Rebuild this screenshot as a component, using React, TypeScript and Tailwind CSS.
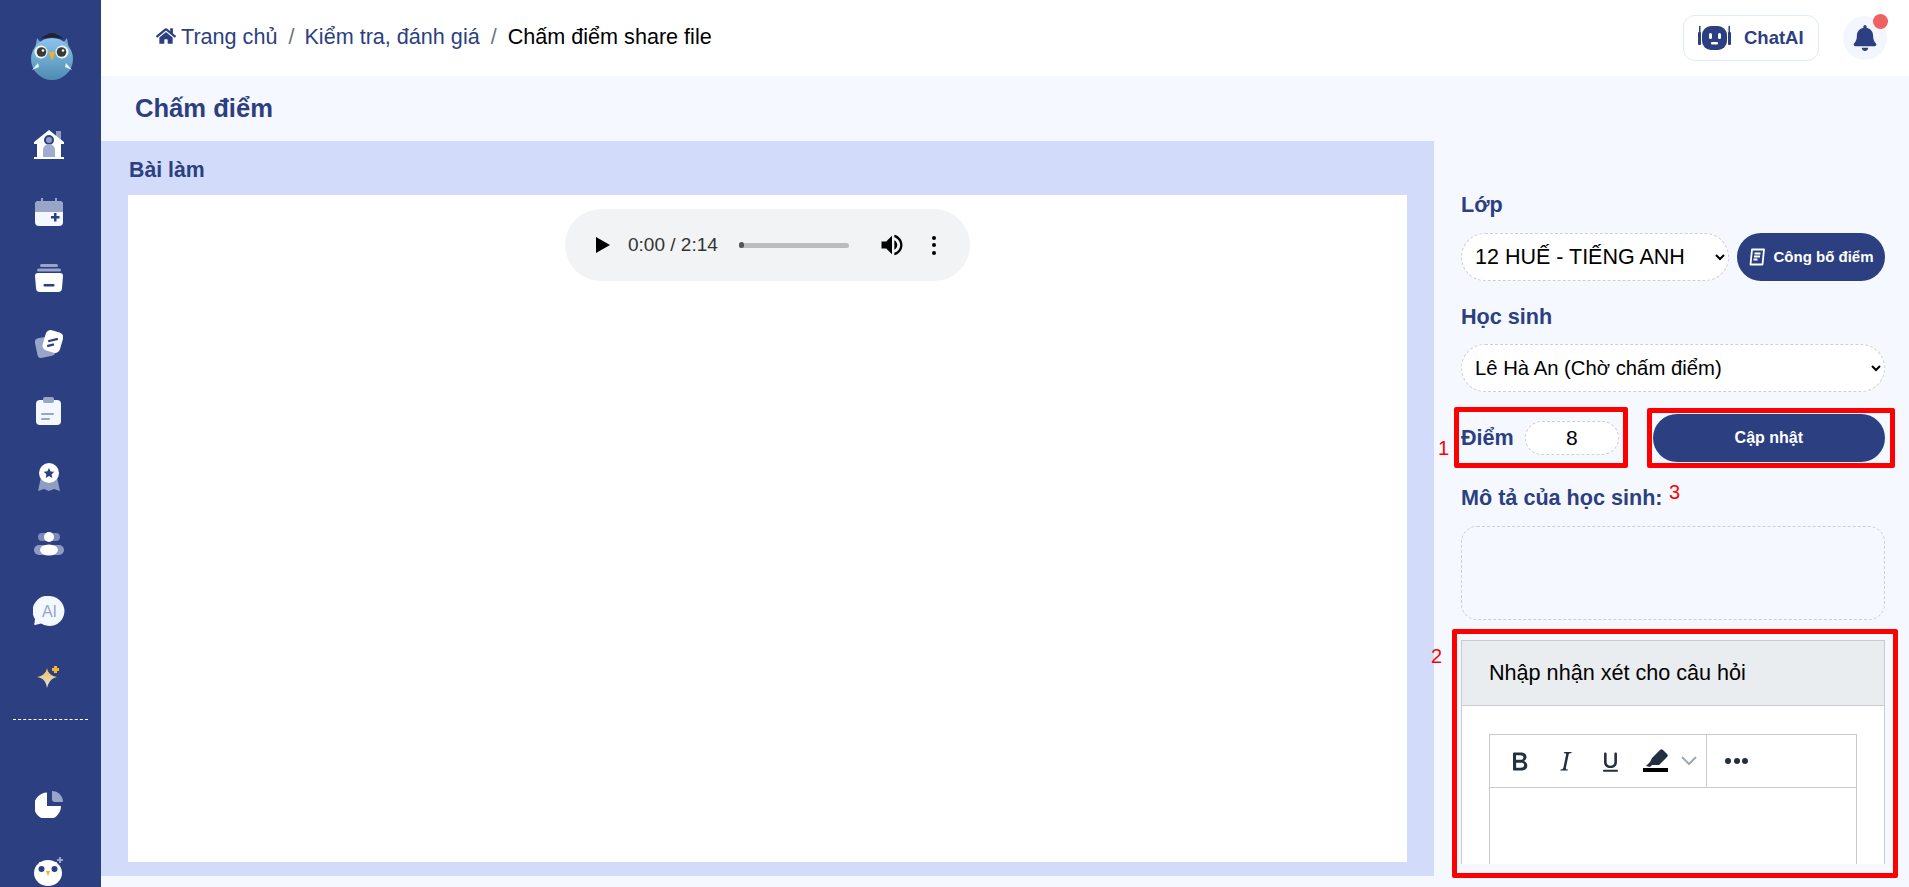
import { FaHome, FaBell } from "react-icons/fa";
import { ReactNode } from "react";

const Logo = () => (
  <svg width="44" height="48" viewBox="0 0 44 48">
    <defs>
      <linearGradient id="owl" x1="0" y1="0" x2="0" y2="1">
        <stop offset="0" stopColor="#8cc4ea" />
        <stop offset="1" stopColor="#4f8cb2" />
      </linearGradient>
    </defs>
    <path d="M7 6l4 5h22l4-5 2 12H5z" fill="#6fa8d2" />
    <circle cx="22" cy="27" r="21" fill="url(#owl)" />
    <path d="M10 7c4-3 8-6 12-6s8 3 12 6c-7-2-17-2-24 0z" fill="#1f2230" />
    <circle cx="11" cy="20" r="6.500" fill="#f3f7fa" />
    <circle cx="32" cy="20" r="6.500" fill="#f3f7fa" />
    <circle cx="11.500" cy="20" r="4.800" fill="#3a3a3a" />
    <circle cx="31.500" cy="20" r="4.800" fill="#3a3a3a" />
    <circle cx="13" cy="18.500" r="1.300" fill="#fff" />
    <circle cx="33" cy="18.500" r="1.300" fill="#fff" />
    <path d="M19 20h6l-3 9z" fill="#f5b21c" />
    <path d="M2 38l6-7 1 4z M42 38l-6-7-1 4z" fill="#eef3f7" />
  </svg>
);

const HomeIcon = () => (
  <svg width="32" height="30" viewBox="0 0 32 30">
    <path d="M23 1h5v9l-5-4z" fill="#8f9cc4" />
    <path d="M16 0L31 12v2h-3v13H4V14H1v-2z" fill="#fff" />
    <rect x="1" y="27" width="30" height="2" fill="#fff" />
    <circle cx="16" cy="10" r="4" fill="#8f9cc4" stroke="#2c3f80" strokeWidth="2" />
    <path d="M10 27V20a6 6 0 0112 0v7z" fill="#a0acd0" />
  </svg>
);

const CalendarIcon = () => (
  <svg width="28" height="28" viewBox="0 0 28 28">
    <rect x="0" y="3" width="28" height="25" rx="4" fill="#f3f8ff" />
    <path d="M0 14V7a4 4 0 014-4h20a4 4 0 014 4v7z" fill="#98a4c8" />
    <rect x="6" y="0" width="2" height="5" fill="#98a4c8" />
    <rect x="20" y="0" width="2" height="5" fill="#98a4c8" />
    <path d="M19 15h2.500v3h3v2.500h-3v3H19v-3h-3V18h3z" fill="#2c3f80" />
  </svg>
);

const ArchiveIcon = () => (
  <svg width="28" height="28" viewBox="0 0 28 28">
    <rect x="5" y="0" width="18" height="3" rx="1.500" fill="#98a4c8" />
    <rect x="2" y="4.500" width="24" height="3" rx="1.500" fill="#98a4c8" />
    <path d="M3 9h22a3 3 0 013 3l-1 12a4 4 0 01-4 4H5a4 4 0 01-4-4L0 12a3 3 0 013-3z" fill="#fff" />
    <rect x="8.500" y="20" width="11" height="2.500" rx="1" fill="#2c3f80" />
  </svg>
);

const NotesIcon = () => (
  <svg width="28" height="29" viewBox="0 0 28 29">
    <rect x="1" y="7" width="18" height="20" rx="4" fill="#98a4c8" transform="rotate(-12 10 17)" />
    <rect x="9" y="1" width="18" height="21" rx="5" fill="#fff" transform="rotate(16 18 11)" />
    <rect x="13" y="9" width="10" height="2.200" fill="#2c3f80" transform="rotate(-14 18 10)" />
    <rect x="12" y="14" width="7" height="2.200" fill="#2c3f80" transform="rotate(-14 16 15)" />
  </svg>
);

const ClipboardIcon = () => (
  <svg width="26" height="28" viewBox="0 0 26 28">
    <rect x="0" y="3" width="25" height="25" rx="4" fill="#f3f8ff" />
    <rect x="7" y="0" width="11" height="6" rx="2" fill="#98a4c8" />
    <rect x="5" y="16" width="13" height="2" rx="1" fill="#98a4c8" />
    <rect x="5" y="21" width="9" height="2" rx="1" fill="#98a4c8" />
  </svg>
);

const MedalIcon = () => (
  <svg width="22" height="29" viewBox="0 0 22 29">
    <path d="M3 14h16l3 14-6-2-5 2-5-2-6 2z" fill="#8f9cc4" />
    <circle cx="11" cy="10" r="10" fill="#fff" />
    <path d="M11 5l1.600 3.400 3.700.4-2.700 2.500.7 3.700L11 13l-3.300 1.900.7-3.700-2.700-2.500 3.700-.4z" fill="#2c3f80" />
  </svg>
);

const UsersIcon = () => (
  <svg width="30" height="24" viewBox="0 0 30 24">
    <rect x="4" y="1" width="22" height="8" rx="4" fill="#7c8ab6" />
    <rect x="0" y="13" width="30" height="10" rx="5" fill="#8f9cc4" />
    <circle cx="15" cy="5" r="5" fill="#fff" />
    <ellipse cx="15" cy="18" rx="9" ry="5.500" fill="#fff" />
  </svg>
);

const AiIcon = () => (
  <svg width="32" height="30" viewBox="0 0 32 30">
    <path d="M16.500 0a15 15 0 11-8.500 27.400L2 29c-1 0-1-1-.5-2l.5-4A15 15 0 0116.500 0z" fill="#f3f8ff" />
    <text x="16.500" y="21" textAnchor="middle" fontFamily="Liberation Sans, sans-serif" fontSize="16" fill="#98a4c8">AI</text>
  </svg>
);

const SparkleIcon = () => (
  <svg width="24" height="24" viewBox="0 0 24 24">
    <defs>
      <linearGradient id="sparkle" x1="0" y1="0" x2="0" y2="1">
        <stop offset="0" stopColor="#f6c04d" />
        <stop offset="1" stopColor="#dfe1e8" />
      </linearGradient>
    </defs>
    <path d="M10 3c1 5 4 8 10 9-5 1-8 4-10 11-1-7-4-10-10-11 6-1 9-4 10-9z" fill="url(#sparkle)" />
    <path d="M17 1h3v2h2v3h-2v2h-3V6h-2V3h2z" fill="#f6b530" />
  </svg>
);

const PieIcon = () => (
  <svg width="28" height="27" viewBox="0 0 28 27">
    <path d="M12 1.500V15h14a13.500 13.500 0 11-14-13.500z" fill="#fff" />
    <path d="M17 0a11 11 0 0111 11h-8a3 3 0 01-3-3z" fill="#98a4c8" />
  </svg>
);

const OwlMono = () => (
  <svg width="30" height="30" viewBox="0 0 30 30">
    <ellipse cx="14" cy="17" rx="14" ry="13" fill="#fff" />
    <path d="M5 6h18l-1 2H6z" fill="#fff" />
    <path d="M25 1h2v2h2v2h-2v2h-2V5h-2V3h2z" fill="#98a4c8" />
    <circle cx="7.500" cy="13" r="3" fill="#2c3f80" />
    <circle cx="20.500" cy="13" r="3" fill="#2c3f80" />
    <path d="M12 15h4l-2 5z" fill="#f5b21c" />
  </svg>
);

const NavItem = ({ children }: { children: ReactNode }) => (
  <div className="flex h-[66.5px] shrink-0 items-center justify-center">{children}</div>
);

const Sidebar = () => (
  <aside className="flex w-[101px] shrink-0 flex-col overflow-hidden bg-[#2c3f80] pr-[3px]">
    <div className="flex h-[112px] shrink-0 items-center justify-center pl-[6px]">
      <Logo />
    </div>
    <NavItem><HomeIcon /></NavItem>
    <NavItem><CalendarIcon /></NavItem>
    <NavItem><ArchiveIcon /></NavItem>
    <NavItem><NotesIcon /></NavItem>
    <NavItem><ClipboardIcon /></NavItem>
    <NavItem><MedalIcon /></NavItem>
    <NavItem><UsersIcon /></NavItem>
    <NavItem><AiIcon /></NavItem>
    <NavItem><SparkleIcon /></NavItem>
    <div className="mx-[13px] mt-[8px] mb-[52px] w-[75px] shrink-0 border-t border-dashed border-white" />
    <NavItem><PieIcon /></NavItem>
    <NavItem><OwlMono /></NavItem>
  </aside>
);

const RobotIcon = () => (
  <svg width="33" height="26" viewBox="0 0 33 26">
    <rect x="0" y="7" width="3" height="13" rx="1" fill="#2c3f80" />
    <rect x="30" y="7" width="3" height="13" rx="1" fill="#2c3f80" />
    <rect x="1" y="1" width="1.500" height="7" fill="#2c3f80" />
    <rect x="30.500" y="1" width="1.500" height="7" fill="#2c3f80" />
    <rect x="4" y="1" width="25" height="24" rx="9" fill="#2c3f80" />
    <rect x="11" y="8" width="3" height="6" rx="1.500" fill="#fff" />
    <rect x="20" y="8" width="3" height="6" rx="1.500" fill="#fff" />
    <rect x="13" y="17" width="7" height="2.500" rx="1" fill="#fff" />
  </svg>
);

const Header = () => (
  <header className="flex h-[76px] shrink-0 items-center justify-between bg-white pr-[22px] pl-[55px]">
    <nav className="flex items-center pb-[1px] text-[21.600px] text-[#2c3f80]">
      <FaHome className="mr-[5px] h-[20px] w-[20px] -translate-y-px" />
      <span>Trang chủ</span>
      <span className="ml-[11px] mr-[10px] text-[#6c757d]">/</span>
      <span>Kiểm tra, đánh giá</span>
      <span className="ml-[11px] mr-[11px] text-[#6c757d]">/</span>
      <span className="text-black">Chấm điểm share file</span>
    </nav>
    <div className="flex items-center">
      <button className="flex h-[46px] w-[136px] items-center gap-[13px] rounded-[12px] border border-[#e0e8fd] bg-white pl-[14px] text-[18.500px] font-bold text-[#2c3f80]">
        <RobotIcon />
        ChatAI
      </button>
      <div className="relative ml-[24px] flex h-[44px] w-[44px] items-center justify-center rounded-full bg-[#f3f6fe]">
        <FaBell className="h-[26px] w-[26px] text-[#2c3f80]" />
        <span className="absolute -top-[2px] right-[-0.500px] h-[15px] w-[15px] rounded-full bg-[#f06161]" />
      </div>
    </div>
  </header>
);

const AudioBar = () => (
  <div className="ml-[437px] mt-[14px] flex h-[72px] w-[405px] items-center rounded-full bg-[#f1f3f4] pl-[31px] text-[19px] text-[#333]">
    <svg width="14" height="16" viewBox="0 0 14 16"><path d="M0 0l14 8-14 8z" fill="#000" /></svg>
    <span className="ml-[18px] w-[90px] whitespace-nowrap">0:00 / 2:14</span>
    <div className="relative ml-[21px] h-[5px] w-[110px] rounded-full bg-[#bcbcbc]">
      <span className="absolute top-[-0.500px] left-0 h-[6px] w-[5px] rounded-full bg-[#555]" />
    </div>
    <svg className="ml-[29px]" width="28" height="28" viewBox="0 0 24 24" fill="#000">
      <path d="M3 9v6h4l5 5V4L7 9H3zm13.500 3c0-1.770-1.020-3.290-2.500-4.030v8.050c1.480-.73 2.500-2.250 2.500-4.020zM14 3.230v2.060c2.890.86 5 3.540 5 6.710s-2.110 5.850-5 6.710v2.060c4.010-.91 7-4.490 7-8.770s-2.990-7.860-7-8.770z" />
    </svg>
    <div className="ml-[26px] flex flex-col gap-[3.500px]">
      <span className="h-[4px] w-[4px] rounded-full bg-black" />
      <span className="h-[4px] w-[4px] rounded-full bg-black" />
      <span className="h-[4px] w-[4px] rounded-full bg-black" />
    </div>
  </div>
);

const FieldSelect = ({ value, className }: { value: string; className: string }) => (
  <select
    defaultValue={value}
    className={`h-[48px] rounded-[24px] border border-dashed border-[#cfcfcf] bg-white pl-[9px] pr-[6px] text-black ${className}`}
  >
    <option>{value}</option>
  </select>
);

const Label = ({ children, className }: { children: ReactNode; className?: string }) => (
  <div className={`text-[21.600px] leading-[24px] font-bold text-[#2c3f80] ${className ?? ""}`}>{children}</div>
);

const Editor = () => (
  <div className="mt-[20px] h-[224px] shrink-0 overflow-hidden">
    <div className="h-[300px] border border-[#c8ccd0] bg-white">
      <div className="flex h-[65px] items-center border-b border-[#c8ccd0] bg-[#eaedf0] pl-[27px] text-[21.600px] text-black">
        Nhập nhận xét cho câu hỏi
      </div>
      <div className="mx-[27px] mt-[28px] h-[200px] border border-[#c8ccd0]">
        <div className="flex h-[53px] items-center border-b border-[#c8ccd0] text-[#222f3e]">
          <div className="flex h-full w-[217px] items-center border-r border-[#c8ccd0] pl-[7px]">
            <span className="flex w-[45.500px] justify-center">
              <svg width="31" height="31" viewBox="0 0 24 24" fill="currentColor"><path d="M7.800 19c-.3 0-.5 0-.6-.2l-.2-.5V5.700c0-.2 0-.4.2-.5l.6-.2h5c1.500 0 2.700.3 3.500 1 .7.6 1.100 1.400 1.100 2.500a3 3 0 01-.6 1.900c-.4.6-1 1-1.600 1.200.4.100.9.3 1.300.6s.8.7 1 1.200c.4.400.5 1 .5 1.600 0 1.300-.4 2.300-1.300 3-.8.7-2.100 1-3.800 1H7.800zm5-8.300c.6 0 1.200-.1 1.600-.5.4-.3.6-.7.6-1.300 0-1.100-.8-1.700-2.300-1.700H9.300v3.500h3.500zm.5 6c.7 0 1.300-.1 1.700-.4.400-.4.6-.9.6-1.500s-.2-1-.7-1.400c-.4-.3-1-.4-2-.4H9.400v3.800h4z" /></svg>
            </span>
            <span className="flex w-[45.500px] justify-center">
              <svg width="31" height="31" viewBox="0 0 24 24" fill="currentColor"><path d="M16.700 4.700l-.1.9h-.3c-.6 0-1 0-1.400.3-.3.3-.4.6-.5 1.100l-2.100 9.800v.6c0 .5.400.8 1.400.8h.2l-.2.8H8l.2-.8h.2c1.100 0 1.800-.5 2-1.500l2-9.800.1-.5c0-.6-.4-.8-1.400-.8h-.3l.2-.9h5.800z" /></svg>
            </span>
            <span className="flex w-[45.500px] justify-center">
              <svg width="31" height="31" viewBox="0 0 24 24" fill="currentColor"><path d="M16 5c.6 0 1 .4 1 1v6.500c0 2.800-2.200 4.500-5 4.500s-5-1.700-5-4.500V6c0-.6.4-1 1-1s1 .4 1 1v6.500c0 1.700 1.300 2.700 3 2.700s3-1 3-2.700V6c0-.6.4-1 1-1zM7 18.300h10a.8.800 0 010 1.700H7a.8.800 0 010-1.700z" /></svg>
            </span>
            <span className="flex w-[45.500px] justify-center">
              <svg width="26" height="24" viewBox="0 0 26 24">
                <path d="M17 1c1-1 2-1 3 0l4 4c1 1 1 2 0 3l-8 8H9l-2 2-4-1 4-4 2-4z" fill="#222f3e" />
                <rect x="0" y="19" width="25" height="4" fill="#000" />
              </svg>
            </span>
            <svg className="ml-[2px]" width="16" height="10" viewBox="0 0 16 10"><path d="M1 1l7 7 7-7" fill="none" stroke="#a3a9b1" strokeWidth="2" /></svg>
          </div>
          <div className="ml-[18px] flex gap-[2.500px]">
            <span className="h-[6px] w-[6px] rounded-full bg-[#222f3e]" />
            <span className="h-[6px] w-[6px] rounded-full bg-[#222f3e]" />
            <span className="h-[6px] w-[6px] rounded-full bg-[#222f3e]" />
          </div>
        </div>
      </div>
    </div>
  </div>
);

const RightPanel = () => (
  <div className="flex flex-1 flex-col pr-[24px] pl-[27px] pt-[52px]">
    <Label>Lớp</Label>
    <div className="mt-[16px] flex items-center gap-[8px]">
      <FieldSelect value="12 HUẾ - TIẾNG ANH" className="w-[268px] text-[21.500px]" />
      <button className="flex h-[48px] w-[148px] items-center justify-center gap-[8px] rounded-full bg-[#2c3f80] text-[15px] font-bold text-white">
        <svg width="17" height="18" viewBox="0 0 17 18" fill="none" stroke="#fff" strokeWidth="1.800">
          <path d="M3 1.500h12l-1.500 15H1.500z" strokeLinejoin="round" />
          <path d="M5.500 5.500h6M5 8.500h6M4.500 11.500h4" />
        </svg>
        Công bố điểm
      </button>
    </div>
    <Label className="mt-[24px]">Học sinh</Label>
    <FieldSelect value="Lê Hà An (Chờ chấm điểm)" className="mt-[15px] w-[424px] text-[20.300px]" />
    <div className="mt-[22px] flex items-center">
      <Label>Điểm</Label>
      <input
        readOnly
        value="8"
        className="ml-[11px] h-[34px] w-[94px] rounded-[17px] border border-dashed border-[#cfcfcf] bg-white text-center text-[21px] text-black"
      />
      <button className="ml-[34px] h-[48px] w-[232px] rounded-full bg-[#2c3f80] text-[16px] font-bold text-white">Cập nhật</button>
    </div>
    <Label className="mt-[24px]">Mô tả của học sinh:</Label>
    <div className="mt-[16px] h-[94px] shrink-0 rounded-[16px] border border-dashed border-[#cfcfcf]" />
    <Editor />
  </div>
);

const Annotation = ({ className }: { className: string }) => (
  <div className={`absolute rounded-[2px] border-[5px] border-[#ff0000] ${className}`} />
);

const Mark = ({ className, children }: { className: string; children: string }) => (
  <span className={`absolute text-[20px] leading-none text-[#ff0000] ${className}`}>{children}</span>
);

export default function App() {
  return (
    <div className="relative flex h-screen w-full overflow-hidden bg-[#f5f8ff] font-['Liberation_Sans',Arial,sans-serif]">
      <Sidebar />
      <main className="flex min-w-0 flex-1 flex-col">
        <Header />
        <div className="flex h-[65px] shrink-0 items-center pl-[34px] text-[25.600px] font-bold text-[#2c3f80]">Chấm điểm</div>
        <div className="flex flex-1">
          <section className="h-[735px] w-[1333px] shrink-0 bg-[#d2dbf9] pl-[27px]">
            <div className="flex h-[54px] items-center pl-[1px] pt-[6px] text-[21.300px] font-bold text-[#2c3f80]">Bài làm</div>
            <div className="h-[667px] w-[1279px] overflow-hidden bg-white">
              <AudioBar />
            </div>
          </section>
          <RightPanel />
        </div>
      </main>

      <Annotation className="left-[1454px] top-[407px] h-[61px] w-[174px]" />
      <Annotation className="left-[1647px] top-[408px] h-[60px] w-[248px]" />
      <Annotation className="left-[1452px] top-[629px] h-[249px] w-[446px]" />
      <Mark className="left-[1438px] top-[438px]">1</Mark>
      <Mark className="left-[1431px] top-[646px]">2</Mark>
      <Mark className="left-[1669px] top-[482px]">3</Mark>
    </div>
  );
}
